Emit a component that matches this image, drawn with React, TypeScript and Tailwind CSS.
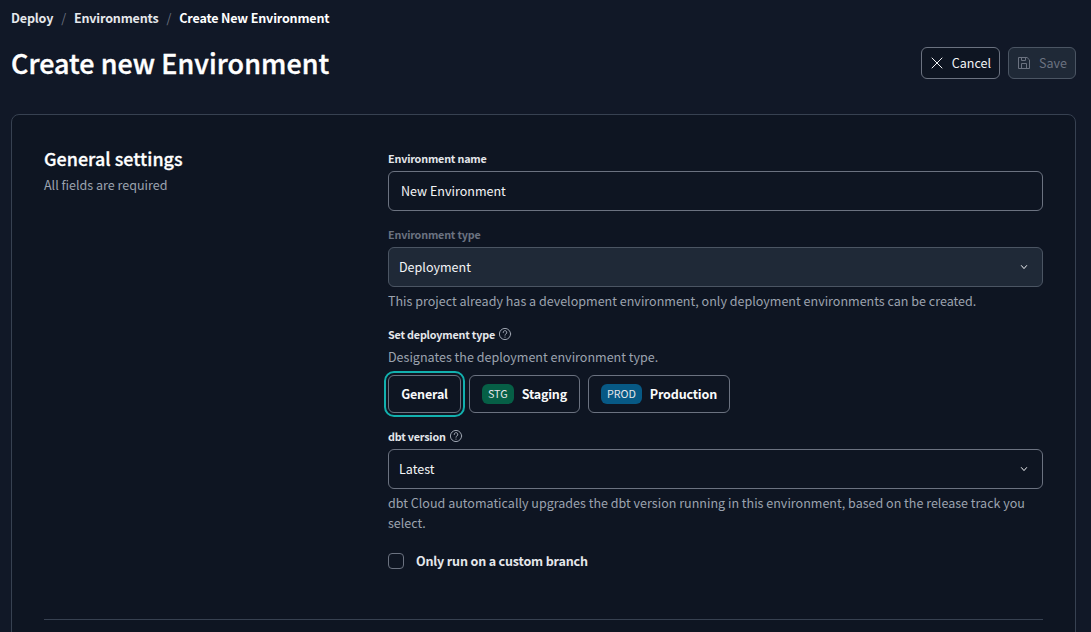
import type { ReactNode } from "react";

function HelpIcon() {
  return (
    <svg className="mb-0.5 size-3.5 shrink-0 text-[#9ca3af]" viewBox="0 0 14 14" fill="none" stroke="currentColor" strokeLinecap="round" strokeLinejoin="round">
      <circle cx="7" cy="7" r="5.6" />
      <path d="M5.2 5.5a1.8 1.8 0 1 1 2.7 1.5c-.6.35-.9.6-.9 1.2" />
      <path d="M7 10v.1" strokeWidth="1.2" />
    </svg>
  );
}

function ChevronIcon() {
  return (
    <svg className="size-2 shrink-0" viewBox="0 0 8 8" fill="none" stroke="currentColor" strokeLinecap="round" strokeLinejoin="round">
      <path d="M1.4 2.6 4 5.6l2.6-3" />
    </svg>
  );
}

function CloseIcon() {
  return (
    <svg className="size-3 shrink-0" viewBox="0 0 12 12" fill="none" stroke="currentColor" strokeLinecap="round">
      <path d="m1 1 10 10M11 1 1 11" />
    </svg>
  );
}

function SaveIcon() {
  return (
    <svg className="size-3 shrink-0" viewBox="0 0 12 12" fill="none" stroke="currentColor" strokeLinejoin="round">
      <path d="M.5.5h8.6l2.4 2.4v8.6H.5z" />
      <path d="M3.5.5v3h4v-3M3.5 11.5v-5h5v5" />
    </svg>
  );
}

function Label({ children, muted, help }: { children: ReactNode; muted?: boolean; help?: boolean }) {
  return (
    <div className={muted ? "flex h-4 items-center gap-[3px] text-[#6b7280]" : "flex h-4 items-center gap-[3px] text-[#e5e7eb]"}>
      <span className="text-[10.75px] leading-4 font-bold tracking-[-0.18px]">{children}</span>
      {help && <HelpIcon />}
    </div>
  );
}

function Select({ value, disabled }: { value: string; disabled?: boolean }) {
  return (
    <button
      disabled={disabled}
      className={
        disabled
          ? "mt-1 flex h-10 w-full items-center justify-between rounded-md border border-[#4b5563] bg-[#1f2937] pr-3.5 pl-2.5 text-[#f3f4f6]"
          : "mt-1 flex h-10 w-full items-center justify-between rounded-md border border-[#6b7280] pr-3.5 pl-2.5 text-[#f3f4f6]"
      }
    >
      <span>{value}</span>
      <ChevronIcon />
    </button>
  );
}

export default function App() {
  return (
    <div className="h-[632px] overflow-hidden bg-[#111827] pr-[15px] pl-[11px] font-['Noto_Sans_CJK_SC',sans-serif] text-[12.54px] leading-5 text-[#9ca3af]">
      <nav className="flex h-9 items-center gap-2 font-bold tracking-[-0.17px] text-[#e5e7eb]">
        <a>Deploy</a>
        <span className="font-normal text-[#6b7280]">/</span>
        <a>Environments</a>
        <span className="font-normal text-[#6b7280]">/</span>
        <a className="text-white">Create New Environment</a>
      </nav>
      <header className="mt-2 flex h-10 items-center justify-between">
        <h1 className="mb-0.5 text-[26.87px] leading-10 font-medium tracking-[0.07px] text-white [-webkit-text-stroke:0.4px_white]">Create new Environment</h1>
        <div className="mb-0.5 flex gap-2">
          <button className="flex h-8 w-[79px] items-center justify-between rounded-md border border-[#6b7280] bg-[#0e1522] pr-2 pl-[9px] text-[#f3f4f6]">
            <CloseIcon />
            Cancel
          </button>
          <button disabled className="flex h-8 w-[68px] items-center justify-between rounded-md border border-[#4b5563] bg-[#1f2937] pr-2 pl-[9px] text-[#6b7280]">
            <SaveIcon />
            Save
          </button>
        </div>
      </header>
      <main className="mt-[30px] h-[560px] rounded-lg border border-[#374151] bg-[#0e1522] px-8 pt-[31px]">
        <section className="flex h-[474px] border-b border-[#374151]">
          <div className="w-[344px] shrink-0">
            <h2 className="text-[17.9px] leading-6 font-medium tracking-[0.04px] text-white [-webkit-text-stroke:0.3px_white]">General settings</h2>
            <p className="mt-[5px]">All fields are required</p>
          </div>
          <div className="flex-1 pt-[5px]">
            <Label>Environment name</Label>
            <input
              className="mt-1 block h-10 w-full rounded-md border border-[#6b7280] bg-transparent px-3 pb-0.5 text-[#f3f4f6] outline-none"
              defaultValue="New Environment"
            />
            <div className="mt-4">
              <Label muted>Environment type</Label>
              <Select value="Deployment" disabled />
              <p className="mt-1">
                This project already has a development environment, only deployment environments can be created.
              </p>
            </div>
            <div className="mt-4">
              <Label help>Set deployment type</Label>
              <p className="mt-1">Designates the deployment environment type.</p>
              <div className="mt-2 flex gap-2 font-bold tracking-[-0.18px] text-[#f9fafb]">
                <button className="h-[38px] w-[73px] rounded-md border border-[#6b7280] outline-2 outline-offset-2 outline-[#12b0ae]">
                  General
                </button>
                <button className="flex h-[38px] w-[111px] items-center justify-between rounded-md border border-[#6b7280] px-3">
                  <span className="h-5 rounded-md bg-[#065f46] px-1.5 text-[10.75px] leading-[19px] font-normal tracking-[-0.05px] text-[#e5e7eb]">STG</span>
                  Staging
                </button>
                <button className="flex h-[38px] w-[142px] items-center justify-between rounded-md border border-[#6b7280] px-3">
                  <span className="h-5 rounded-md bg-[#075985] px-1.5 text-[10.75px] leading-[19px] font-normal tracking-[-0.05px] text-[#e5e7eb]">PROD</span>
                  Production
                </button>
              </div>
            </div>
            <div className="mt-4">
              <Label help>dbt version</Label>
              <Select value="Latest" />
              <p className="mt-1">
                dbt Cloud automatically upgrades the dbt version running in this environment, based on the release track you select.
              </p>
            </div>
            <label className="mt-[18px] flex items-center gap-3 font-bold tracking-[-0.17px] text-[#e5e7eb]">
              <input type="checkbox" className="size-4 appearance-none rounded border border-[#6b7280]" />
              Only run on a custom branch
            </label>
          </div>
        </section>
      </main>
    </div>
  );
}
